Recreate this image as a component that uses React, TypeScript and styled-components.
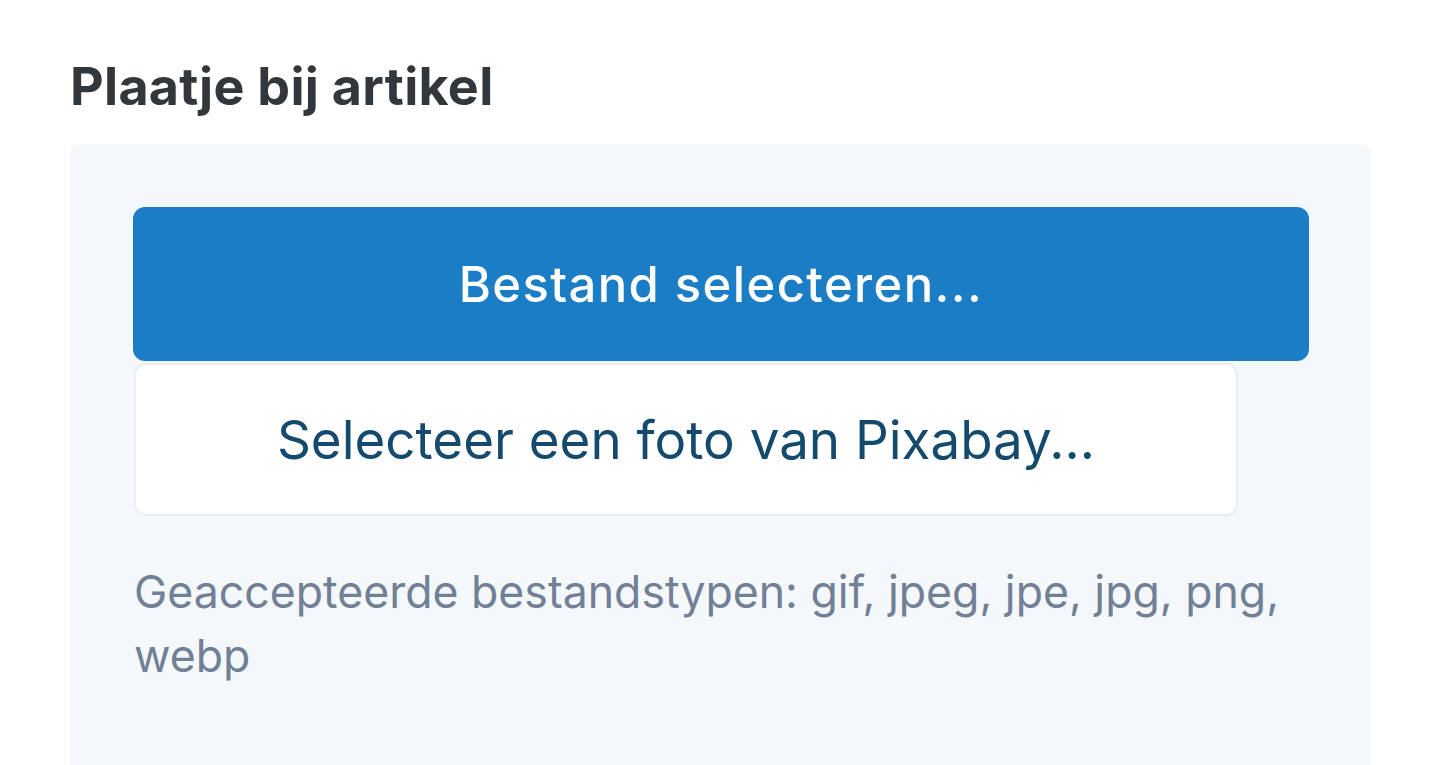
import React from "react";
import styled, { createGlobalStyle } from "styled-components";

const Global = createGlobalStyle`
  html, body { margin: 0; padding: 0; background: #ffffff; }
  body { font-family: Inter, "Noto Sans", sans-serif; -webkit-font-smoothing: antialiased; }
`;

const Page = styled.div`
  padding: 56px 68px 0 70px;
  height: 765px;
  box-sizing: border-box;
  overflow: hidden;
  display: flex;
  flex-direction: column;
`;

const Title = styled.h2`
  margin: 0 0 26px 0;
  font-size: 52px;
  line-height: 62px;
  font-weight: 700;
  color: #32373c;
  letter-spacing: 0.3px;
`;

const Panel = styled.div`
  flex: 1;
  background: #f5f8fb;
  border-radius: 10px 10px 0 0;
  padding: 63px 62px 0 63px;
  display: flex;
  flex-direction: column;
  align-items: flex-start;
`;

const PrimaryButton = styled.button`
  width: 100%;
  height: 154px;
  border: none;
  border-radius: 12px;
  background: #1a7dc6;
  color: #ffffff;
  font-family: Inter, "Noto Sans", sans-serif;
  font-size: 49px;
  font-weight: 500;
  letter-spacing: 1.4px;
  cursor: pointer;
`;

const SecondaryButton = styled.button`
  margin-top: 2px;
  margin-left: 1px;
  width: 1104px;
  height: 153px;
  border: 2px solid #e9eef2;
  border-radius: 12px;
  background: #ffffff;
  color: #144a6e;
  font-family: Inter, "Noto Sans", sans-serif;
  font-size: 52.9px;
  font-weight: 400;
  cursor: pointer;
`;

const Help = styled.p`
  margin: 44px 0 0 1px;
  font-size: 44.6px;
  line-height: 64px;
  color: #718096;
  max-width: 1176px;
`;

export default function App() {
  return (
    <>
      <Global />
      <Page>
        <Title>Plaatje bij artikel</Title>
        <Panel>
          <PrimaryButton>Bestand selecteren...</PrimaryButton>
          <SecondaryButton>Selecteer een foto van Pixabay...</SecondaryButton>
          <Help>Geaccepteerde bestandstypen: gif, jpeg, jpe, jpg, png, webp</Help>
        </Panel>
      </Page>
    </>
  );
}
